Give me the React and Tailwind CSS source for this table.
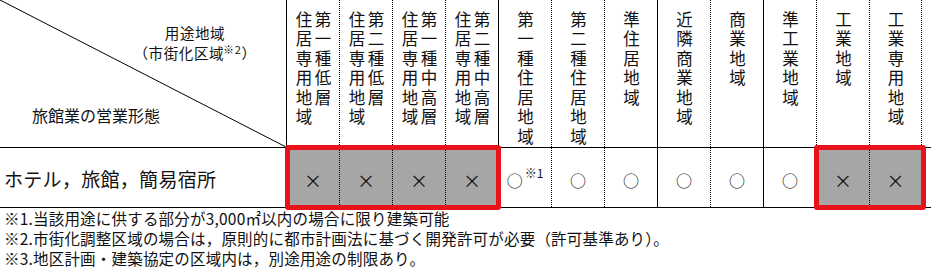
import React from "react";

const heads = [
  { lines: ["第一種低層", "住居専用地域"], line: "border-solid" },
  { lines: ["第二種低層", "住居専用地域"], line: "border-dotted" },
  { lines: ["第一種中高層", "住居専用地域"], line: "border-dotted" },
  { lines: ["第二種中高層", "住居専用地域"], line: "border-dotted" },
  { lines: ["第一種住居地域"], line: "border-solid" },
  { lines: ["第二種住居地域"], line: "border-dotted" },
  { lines: ["準住居地域"], line: "border-dotted" },
  { lines: ["近隣商業地域"], line: "border-solid" },
  { lines: ["商業地域"], line: "border-dotted" },
  { lines: ["準工業地域"], line: "border-solid" },
  { lines: ["工業地域"], line: "border-dotted" },
  { lines: ["工業専用地域"], line: "border-dotted" },
];

const Cross = ({ line, last }) => (
  <div
    className={`w-[53px] h-full border-l border-black bg-[#a6a6a6] flex items-center justify-center pt-[4px] ${line} ${last ? "border-r border-r-black border-r-solid" : ""}`}
  >
    <span className="text-[18px] leading-none">×</span>
  </div>
);

const Circle = ({ line, note }) => (
  <div className={`w-[53px] h-full border-l border-black flex items-center justify-center pt-[4px] ${line}`}>
    <span className="text-[16px] leading-none">○</span>
    {note && <span className="text-[12px] leading-none -mt-[14px] ml-[2px]">※1</span>}
  </div>
);

export default function App() {
  return (
    <div className="w-[931px] h-[269px] bg-white text-[#111] font-['Noto_Sans_CJK_JP',sans-serif] overflow-hidden">
      {/* header row */}
      <div className="flex h-[148px] border-b border-black">
        <div className="relative w-[286px] shrink-0">
          <svg className="absolute inset-0" width="286" height="147">
            <line x1="0" y1="0" x2="286" y2="147" stroke="#000" strokeWidth="1" />
          </svg>
          <div className="relative flex flex-col">
            <div className="ml-[115px] w-[160px] pt-[23px] text-center text-[14.5px] leading-[20px] tracking-[0.6px]">
              <div>用途地域</div>
              <div>
                （市街化区域<sup className="text-[11px] -ml-[1px]">※2</sup>）
              </div>
            </div>
            <div className="ml-[32px] mt-[42px] text-[16px] leading-[20px]">旅館業の営業形態</div>
          </div>
        </div>
        {heads.map((h, i) => (
          <div
            key={i}
            className={`w-[53px] shrink-0 border-l border-black flex justify-center pt-[11px] ${h.line} ${i === heads.length - 1 ? "border-r border-r-black border-r-solid" : ""}`}
          >
            <div className="[writing-mode:vertical-rl] whitespace-nowrap text-[16.5px] leading-[19px] tracking-[3px]">
              {h.lines.map((l, j) => (
                <React.Fragment key={j}>
                  {j > 0 && <br />}
                  {l}
                </React.Fragment>
              ))}
            </div>
          </div>
        ))}
      </div>

      {/* data row */}
      <div className="flex h-[60px] border-b border-black">
        <div className="w-[286px] shrink-0 flex items-center pl-[4px] pt-[4px] text-[19px] tracking-[0.3px]">
          ホテル，旅館，簡易宿所
        </div>
        <div className="relative flex h-full">
          <Cross line="border-solid" />
          <Cross line="border-dotted" />
          <Cross line="border-dotted" />
          <Cross line="border-dotted" />
          <div className="absolute -left-[1px] -right-[3px] -top-[3px] -bottom-[3px] border-[5px] border-[#e8121a] rounded-[3px]" />
        </div>
        <Circle line="border-solid" note />
        <Circle line="border-dotted" />
        <Circle line="border-dotted" />
        <Circle line="border-solid" />
        <Circle line="border-dotted" />
        <Circle line="border-solid" />
        <div className="relative flex h-full">
          <Cross line="border-dotted" />
          <Cross line="border-dotted" last />
          <div className="absolute -left-[2px] -right-[4px] -top-[3px] -bottom-[3px] border-[5px] border-[#e8121a] rounded-[3px]" />
        </div>
      </div>

      {/* notes */}
      <div className="pl-[4px] text-[15.5px] leading-[20px] tracking-[0.2px]">
        <div>※1.当該用途に供する部分が3,000㎡以内の場合に限り建築可能</div>
        <div>※2.市街化調整区域の場合は，原則的に都市計画法に基づく開発許可が必要（許可基準あり）。</div>
        <div>※3.地区計画・建築協定の区域内は，別途用途の制限あり。</div>
      </div>
    </div>
  );
}
